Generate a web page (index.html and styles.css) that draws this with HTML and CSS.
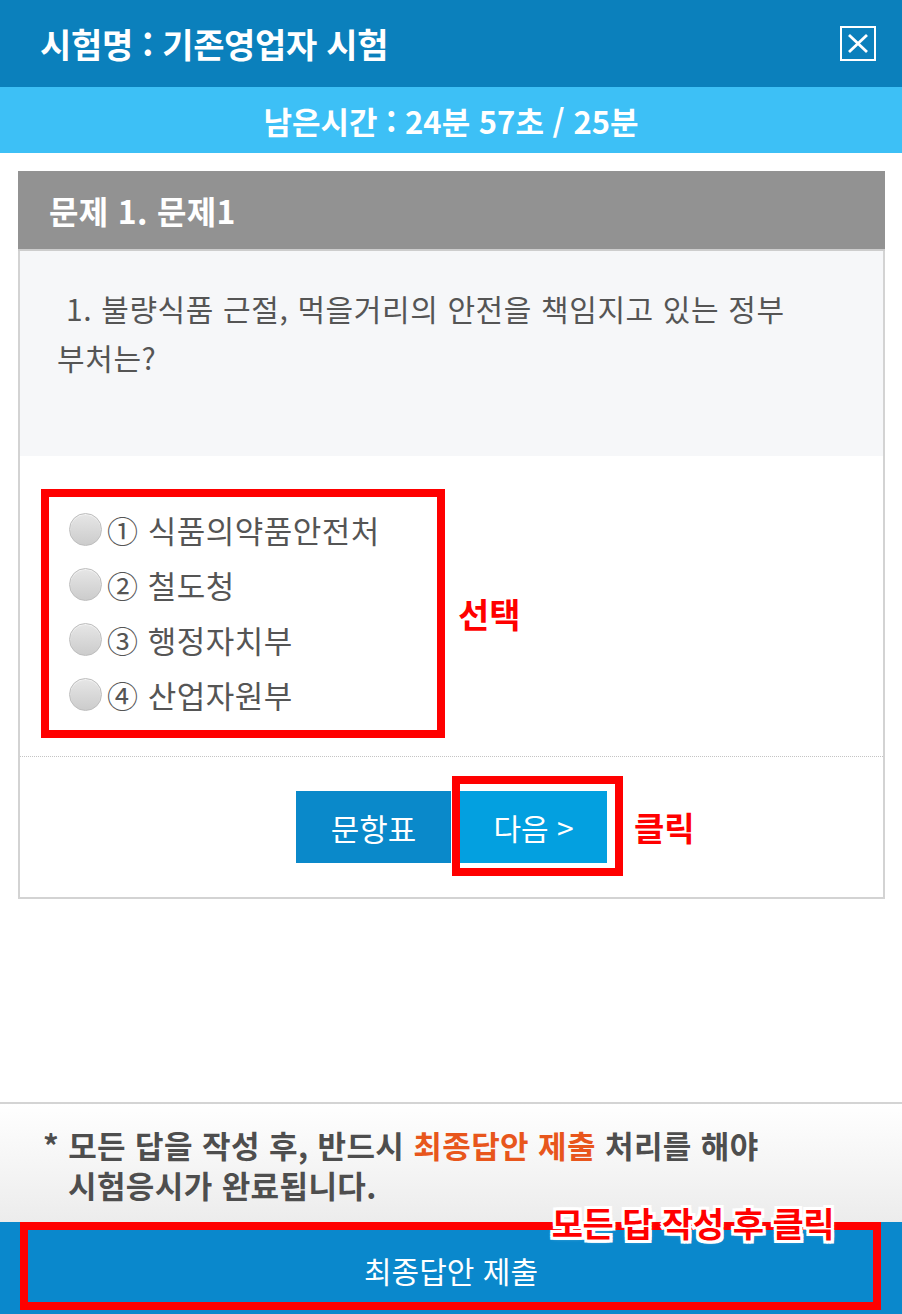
FILE: index.html
```html
<!DOCTYPE html>
<html lang="ko">
<head>
  <meta charset="UTF-8">
  <title>시험 - 기존영업자 시험</title>
  <link rel="stylesheet" href="styles.css">
</head>
<body>
  <!-- 상단 시험명 -->
  <header class="exam-head">
    <h1>시험명 : 기존영업자 시험</h1>
    <button class="close-btn" aria-label="닫기">
      <svg viewBox="0 0 32 31" width="32" height="31">
        <path d="M7 7 L25 24 M25 7 L7 24" stroke="#fff" stroke-width="2.8" fill="none" />
      </svg>
    </button>
  </header>
  <div class="timer">남은시간 : 24분 57초 / 25분</div>

  <!-- 문제 카드 -->
  <div class="quiz-card">
    <div class="quiz-title">문제 1. 문제1</div>
    <div class="question">&nbsp;1. 불량식품 근절, 먹을거리의 안전을 책임지고 있는 정부 부처는?</div>

    <div class="answers">
      <ul class="choice-list">
        <li><span class="radio"></span>① 식품의약품안전처</li>
        <li><span class="radio"></span>② 철도청</li>
        <li><span class="radio"></span>③ 행정자치부</li>
        <li><span class="radio"></span>④ 산업자원부</li>
      </ul>
      <span class="note-label">선택</span>
    </div>

    <div class="nav-buttons">
      <button class="btn btn-list">문항표</button>
      <div class="next-wrap">
        <button class="btn btn-next">다음 &gt;</button>
        <span class="mark-frame"></span>
        <span class="note-label click-label">클릭</span>
      </div>
    </div>
  </div>

  <!-- 하단 안내 / 제출 -->
  <footer class="exam-foot">
    <p class="notice">* 모든 답을 작성 후, 반드시 <em>최종답안 제출</em> 처리를 해야 시험응시가 완료됩니다.</p>
    <div class="submit-area">
      <button class="submit-btn">최종답안 제출</button>
      <span class="mark-frame submit-frame"></span>
      <span class="note-label outline-label">모든 답 작성 후 클릭</span>
    </div>
  </footer>
</body>
</html>
```

FILE: styles.css
```css
* {
  box-sizing: border-box;
}

body {
  margin: 0;
  min-height: 100vh;
  display: flex;
  flex-direction: column;
  background: #fff;
  font-family: "Noto Sans CJK KR", "Noto Sans", sans-serif;
  color: #555;
  word-break: keep-all;
}

button {
  font-family: inherit;
  border: none;
  cursor: pointer;
}

/* header */
.exam-head {
  height: 87px;
  display: flex;
  align-items: center;
  justify-content: space-between;
  padding: 0 26px 0 40px;
  background: #0b80bc;
}

.exam-head h1 {
  margin: 0;
  font-size: 34px;
  font-weight: bold;
  color: #fff;
  letter-spacing: -0.3px;
}

.close-btn {
  width: 36px;
  height: 35px;
  padding: 0;
  background: transparent;
  border: 2px solid #fff;
  display: flex;
  align-items: center;
  justify-content: center;
}

.timer {
  height: 66px;
  display: flex;
  align-items: center;
  justify-content: center;
  background: #3dc0f6;
  color: #fff;
  font-size: 31px;
  font-weight: bold;
}

/* quiz card */
.quiz-card {
  margin: 18px 17px 0 18px;
  border: 2px solid #d3d3d3;
}

.quiz-title {
  margin: -2px -2px 0;
  height: 80px;
  padding-left: 31px;
  display: flex;
  align-items: center;
  background: #929292;
  border-bottom: 2px solid #cdcdcd;
  color: #fff;
  font-size: 32px;
  font-weight: bold;
  letter-spacing: 0.3px;
}

.question {
  height: 205px;
  padding: 33px 38px 0 37px;
  background: #f6f7f9;
  font-size: 30px;
  line-height: 49px;
  letter-spacing: 0.6px;
  color: #555;
}

.answers {
  display: flex;
  align-items: center;
  gap: 13px;
  padding: 33px 0 18px 21px;
  border-bottom: 1px dotted #c4c4c4;
}

.choice-list {
  list-style: none;
  margin: 0;
  width: 404px;
  height: 249px;
  padding: 5px 0 0 20px;
  border: 8px solid #ff0000;
}

.choice-list li {
  height: 55px;
  display: flex;
  align-items: center;
  font-size: 31px;
  letter-spacing: 0.5px;
  color: #555;
}

.radio {
  width: 33px;
  height: 33px;
  margin-right: 5px;
  border-radius: 50%;
  border: 1px solid #bdbdbd;
  background: linear-gradient(#e6e6e6, #cccccc);
  box-shadow: inset 0 1px 1px #f4f4f4;
}

.note-label {
  color: #ff0000;
  font-size: 34px;
  font-weight: bold;
  line-height: 1;
}

.nav-buttons {
  display: flex;
  justify-content: center;
  gap: 9px;
  padding: 34px 0;
}

.btn {
  height: 72px;
  color: #fff;
  font-size: 31px;
}

.btn-list {
  width: 155px;
  background: #0a89ca;
}

.btn-next {
  width: 147px;
  background: #03a0e0;
  font-size: 30px;
}

.next-wrap {
  position: relative;
}

/* red annotation frames */
.mark-frame {
  position: absolute;
  top: -15px;
  left: -8px;
  right: -16px;
  bottom: -13px;
  border: 8px solid #ff0000;
}

.click-label {
  position: absolute;
  left: calc(100% + 27px);
  top: 50%;
  transform: translateY(-50%);
  font-size: 33px;
  white-space: nowrap;
}

/* footer */
.exam-foot {
  margin-top: auto;
}

.notice {
  margin: 0;
  padding: 21px 20px 17px 68px;
  text-indent: -25px;
  border-top: 2px solid #d4d4d4;
  background: linear-gradient(#ffffff, #ececec);
  font-size: 31px;
  font-weight: bold;
  line-height: 40px;
  letter-spacing: 0.4px;
  color: #4e4e4e;
}

.notice em {
  font-style: normal;
  color: #e8561c;
}

.submit-area {
  position: relative;
  height: 92px;
  background: #0a88cc;
}

.submit-btn {
  width: 100%;
  height: 100%;
  padding-top: 4px;
  background: transparent;
  color: #fff;
  font-size: 30px;
}

.submit-frame {
  top: 0;
  left: 20px;
  right: 21px;
  bottom: 4px;
}

.outline-label {
  position: absolute;
  right: 68px;
  top: -16px;
  font-size: 34px;
  letter-spacing: -0.5px;
  white-space: nowrap;
  text-shadow:
    3px 0 0 #fff, -3px 0 0 #fff, 0 3px 0 #fff, 0 -3px 0 #fff,
    3px 3px 0 #fff, -3px -3px 0 #fff, 3px -3px 0 #fff, -3px 3px 0 #fff,
    0 0 5px #fff;
}
```
